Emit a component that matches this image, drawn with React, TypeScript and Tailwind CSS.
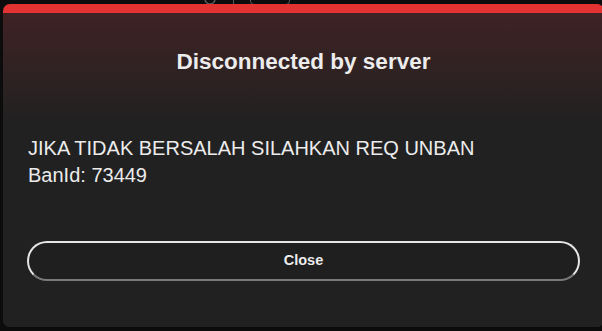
export default function App() {
  return (
    <div
      className="relative w-[602px] h-[331px] overflow-hidden bg-[#0c0c0c]"
      style={{ fontFamily: '"Liberation Sans", Arial, sans-serif' }}
    >
      {/* hint of the page behind the modal */}
      <div className="absolute left-[203px] top-[-8px] flex items-center gap-4">
        <svg width="14" height="14" viewBox="0 0 14 14" fill="none" stroke="#5a5a5a" strokeWidth="1.5">
          <circle cx="7" cy="7" r="5" />
        </svg>
        <span className="w-px h-[12px] bg-[#5a5a5a]" />
        <span className="w-[40px] h-[11px] border border-[#5a5a5a] rounded-sm" />
      </div>

      <div className="absolute left-[3px] top-[4px] w-[601px] h-[323px] rounded-[7px] overflow-hidden bg-[#212121] flex flex-col">
        <div className="h-[9px] bg-[#e33232] shrink-0" />
        <div className="flex-1 flex flex-col bg-gradient-to-b from-[#3f2224] via-[#212121] via-[35%] to-[#212121]">
          <h1 className="mt-[35px] text-center text-[22.5px] font-bold text-[#ececec] leading-[27px]">
            Disconnected by server
          </h1>
          <div className="mt-[60px] px-[25px] text-[20px] leading-[27px] text-[#ececec]">
            <p>JIKA TIDAK BERSALAH SILAHKAN REQ UNBAN</p>
            <p>BanId: 73449</p>
          </div>
          <div className="mt-[52px] px-[24px]">
            <button className="w-full h-[40px] rounded-full border-2 border-[#e6e6e6] border-b-[#7a7a7a] bg-[#1f1f1f] text-[14.5px] font-bold text-[#ececec]">
              Close
            </button>
          </div>
        </div>
      </div>
    </div>
  );
}
